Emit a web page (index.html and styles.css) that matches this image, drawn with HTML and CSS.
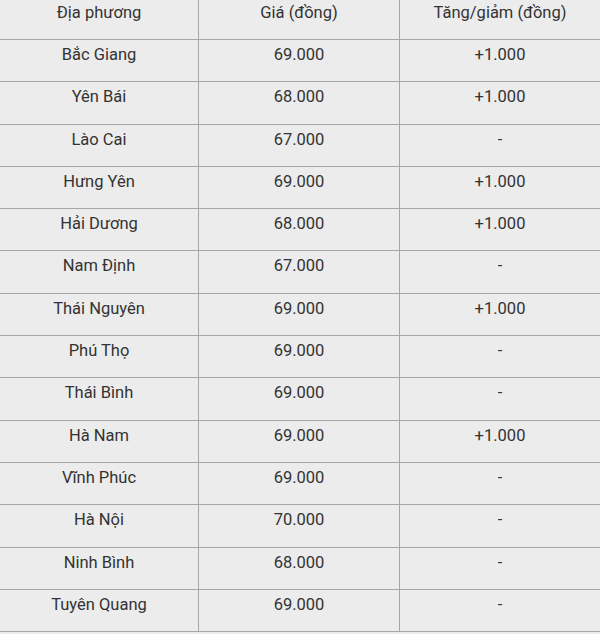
FILE: index.html
```html
<!DOCTYPE html>
<html lang="vi">
<head>
<meta charset="utf-8">
<link rel="stylesheet" href="styles.css">
</head>
<body>
<div class="price-table">
  <div class="cell head c1">Địa phương</div>
  <div class="cell head c2">Giá (đồng)</div>
  <div class="cell head c3">Tăng/giảm (đồng)</div>

  <div class="cell c1">Bắc Giang</div><div class="cell c2">69.000</div><div class="cell c3">+1.000</div>
  <div class="cell c1">Yên Bái</div><div class="cell c2">68.000</div><div class="cell c3">+1.000</div>
  <div class="cell c1">Lào Cai</div><div class="cell c2">67.000</div><div class="cell c3">-</div>
  <div class="cell c1">Hưng Yên</div><div class="cell c2">69.000</div><div class="cell c3">+1.000</div>
  <div class="cell c1">Hải Dương</div><div class="cell c2">68.000</div><div class="cell c3">+1.000</div>
  <div class="cell c1">Nam Định</div><div class="cell c2">67.000</div><div class="cell c3">-</div>
  <div class="cell c1">Thái Nguyên</div><div class="cell c2">69.000</div><div class="cell c3">+1.000</div>
  <div class="cell c1">Phú Thọ</div><div class="cell c2">69.000</div><div class="cell c3">-</div>
  <div class="cell c1">Thái Bình</div><div class="cell c2">69.000</div><div class="cell c3">-</div>
  <div class="cell c1">Hà Nam</div><div class="cell c2">69.000</div><div class="cell c3">+1.000</div>
  <div class="cell c1">Vĩnh Phúc</div><div class="cell c2">69.000</div><div class="cell c3">-</div>
  <div class="cell c1">Hà Nội</div><div class="cell c2">70.000</div><div class="cell c3">-</div>
  <div class="cell c1">Ninh Bình</div><div class="cell c2">68.000</div><div class="cell c3">-</div>
  <div class="cell c1">Tuyên Quang</div><div class="cell c2">69.000</div><div class="cell c3">-</div>
</div>
</body>
</html>
```
FILE: styles.css
```css
html, body {
  margin: 0;
  padding: 0;
  background: #ececec;
}
body {
  width: 600px;
  height: 634px;
  overflow: hidden;
  font-family: Roboto, "Noto Sans", "Liberation Sans", sans-serif;
  font-size: 16.5px;
  color: #333333;
}
.price-table {
  display: grid;
  grid-template-columns: 199px 201px 200px;
  grid-template-rows: 40px repeat(14, 42.3px);
  background: #ececec;
}
.cell {
  box-sizing: border-box;
  text-align: center;
  line-height: 24px;
  padding-top: 3px;
  border-bottom: 1px solid #a6a6a6;
}
.head {
  padding-top: 1px;
}
.c1, .c2 {
  border-right: 1px solid #a6a6a6;
}
```
